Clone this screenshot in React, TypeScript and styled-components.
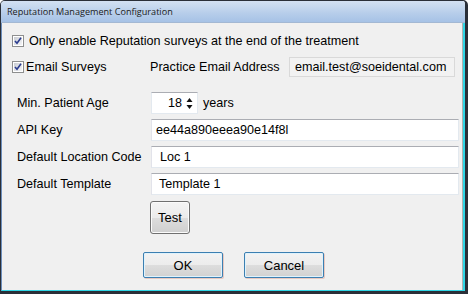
import React from 'react';
import styled, { createGlobalStyle } from 'styled-components';

const GlobalStyle = createGlobalStyle`
  html, body {
    margin: 0;
    padding: 0;
    background: #ffffff;
  }
  body {
    font-family: "Liberation Sans", Arial, sans-serif;
    font-size: 12.6px;
    color: #000;
  }
`;

const Window = styled.div`
  width: 468px;
  height: 294px;
  box-sizing: border-box;
  display: flex;
  flex-direction: column;
  border: 1px solid #2a2f38;
  border-right-width: 3px;
  border-bottom-width: 3px;
  border-radius: 5px 5px 0 0;
  overflow: hidden;
  background: #f0f0f0;
`;

const TitleBar = styled.div`
  height: 21px;
  flex: none;
  display: flex;
  align-items: center;
  padding-left: 6px;
  background: linear-gradient(#d3e1f2, #b6cdea 60%, #a6c2e6);
  border-bottom: 1px solid #a3b8d3;
  font-family: "Open Sans", "Noto Sans", sans-serif;
  font-size: 9.1px;
  color: #1a1a1a;
`;

const Body = styled.div`
  flex: 1;
  display: flex;
  flex-direction: column;
  border-left: 1px solid #6d8fbd;
  border-right: 2px solid #2fd6e6;
  border-bottom: 1px solid #2fd6e6;
  box-shadow: inset -1px 0 0 #b0b0b0;
  padding: 0 4px 0 10px;
`;

const CheckRow = styled.label<{ $top: number; $gap: number }>`
  display: flex;
  align-items: center;
  height: 24px;
  margin-top: ${p => p.$top}px;
  gap: ${p => p.$gap}px;
  white-space: nowrap;
`;

const EmailRow = styled.div`
  display: flex;
  align-items: center;
  height: 21px;
  margin-top: 3px;
`;

const EmailCheck = styled(CheckRow)`
  width: 138px;
  margin-top: 0;
`;

const EmailLabel = styled.span`
  width: 139px;
  white-space: nowrap;
`;

const ReadOnlyBox = styled.div`
  width: 166px;
  height: 20px;
  box-sizing: border-box;
  display: flex;
  align-items: center;
  padding-left: 5px;
  background: #f2f2f2;
  border: 1px solid #d9d9d9;
  white-space: nowrap;
`;

const Form = styled.div`
  display: grid;
  grid-template-columns: 134px 1fr;
  grid-auto-rows: 22px;
  row-gap: 5px;
  margin-top: 15px;
  padding-left: 5px;
  align-items: center;
`;

const Label = styled.span`
  white-space: nowrap;
`;

const TextBox = styled.div<{ $pad: number }>`
  height: 22px;
  box-sizing: border-box;
  display: flex;
  align-items: center;
  padding-left: ${p => p.$pad}px;
  background: #ffffff;
  border: 1px solid #e3e9ef;
  border-top-color: #abadb3;
  border-left-color: #e2e3ea;
  white-space: nowrap;
`;

const AgeCell = styled.div`
  display: flex;
  align-items: center;
  gap: 5px;
`;

const Spinner = styled.div`
  width: 47px;
  height: 22px;
  box-sizing: border-box;
  display: flex;
  align-items: center;
  justify-content: flex-end;
  gap: 4px;
  padding-right: 4px;
  background: #ffffff;
  border: 1px solid #e3e9ef;
  border-top-color: #abadb3;
`;

const TestRow = styled.div`
  margin-top: 6px;
  padding-left: 138px;
`;

const TestButton = styled.button`
  width: 40px;
  height: 33px;
  font: inherit;
  font-size: 13px;
  color: #000;
  border: 1px solid #707070;
  border-radius: 3px;
  background: linear-gradient(#f4f4f4, #ebebeb 50%, #dddddd 51%, #cfcfcf);
  box-shadow: inset 0 0 0 1px #fbfbfb;
  padding: 0;
`;

const ButtonRow = styled.div`
  display: flex;
  gap: 21px;
  margin-top: 18px;
  padding-left: 131px;
`;

const DialogButton = styled.button`
  width: 80px;
  height: 26px;
  font: inherit;
  font-size: 13px;
  color: #000;
  border: 1px solid #3c7fb1;
  border-radius: 2px;
  background: linear-gradient(#f3f3f3, #ececec 50%, #dddddd 51%, #d1d1d1);
  box-shadow: inset 0 0 0 1px #dff2fc, 1px 1px 0 #e8c8c0;
  padding: 0;
`;

function CheckBox() {
  return (
    <svg width="12" height="12" viewBox="0 0 12 12">
      <defs>
        <linearGradient id="cbg" x1="0" y1="0" x2="1" y2="1">
          <stop offset="0" stopColor="#c9ccd3" />
          <stop offset="1" stopColor="#f4f4f6" />
        </linearGradient>
      </defs>
      <rect x="0.5" y="0.5" width="11" height="11" fill="#ffffff" stroke="#8e8f8f" />
      <rect x="2" y="2" width="8" height="8" fill="url(#cbg)" />
      <path d="M3 6 L5 8.3 L9 2.8" fill="none" stroke="#2a3c8f" strokeWidth="1.6" />
    </svg>
  );
}

function SpinArrows() {
  return (
    <svg width="7" height="13" viewBox="0 0 7 13">
      <path d="M3.5 1 L6.5 5 L0.5 5 Z" fill="#111" />
      <path d="M3.5 12 L6.5 8 L0.5 8 Z" fill="#111" />
    </svg>
  );
}

export default function App() {
  return (
    <>
      <GlobalStyle />
      <Window>
        <TitleBar>Reputation Management Configuration</TitleBar>
        <Body>
          <CheckRow $top={6} $gap={5}>
            <CheckBox />
            <span>Only enable Reputation surveys at the end of the treatment</span>
          </CheckRow>
          <EmailRow>
            <EmailCheck $top={0} $gap={2}>
              <CheckBox />
              <span>Email Surveys</span>
            </EmailCheck>
            <EmailLabel>Practice Email Address</EmailLabel>
            <ReadOnlyBox>email.test@soeidental.com</ReadOnlyBox>
          </EmailRow>
          <Form>
            <Label>Min. Patient Age</Label>
            <AgeCell>
              <Spinner>
                <span>18</span>
                <SpinArrows />
              </Spinner>
              <span>years</span>
            </AgeCell>
            <Label>API Key</Label>
            <TextBox $pad={4}>ee44a890eeea90e14f8l</TextBox>
            <Label>Default Location Code</Label>
            <TextBox $pad={8}>Loc 1</TextBox>
            <Label>Default Template</Label>
            <TextBox $pad={7}>Template 1</TextBox>
          </Form>
          <TestRow>
            <TestButton>Test</TestButton>
          </TestRow>
          <ButtonRow>
            <DialogButton>OK</DialogButton>
            <DialogButton>Cancel</DialogButton>
          </ButtonRow>
        </Body>
      </Window>
    </>
  );
}
